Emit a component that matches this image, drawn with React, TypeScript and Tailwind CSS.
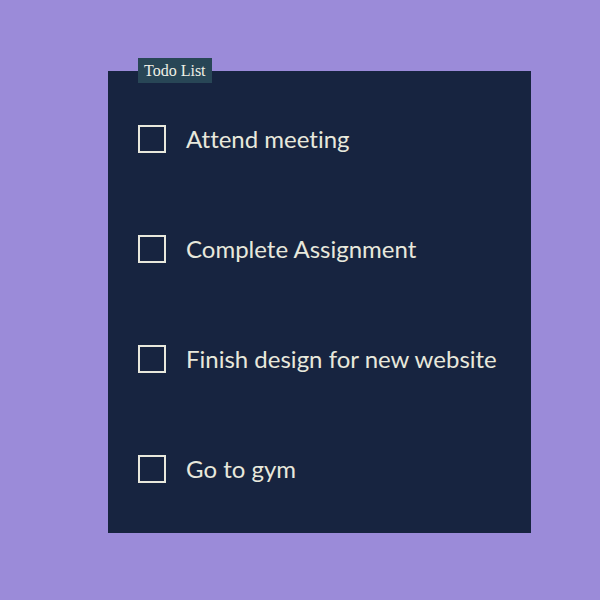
import React from "react";

const todos = ["Attend meeting", "Complete Assignment", "Finish design for new website", "Go to gym"];

const App: React.FC = () => {
  return (
    <div className="w-[600px] h-[600px] bg-[#9b8bd9] relative">
      <div className="absolute left-[108px] top-[71px] w-[423px] h-[462px] bg-[#172440] pl-[30px] pt-[13px]">
        <div className="absolute left-[30px] -top-[13px] h-[25px] px-[6px] bg-[#284656] text-[#f0f0e6] text-[16px] leading-[25px] font-['Liberation_Serif',serif]">
          Todo List
        </div>
        {todos.map((t) => (
          <div key={t} className="h-[110px] flex items-center gap-[20px]">
            <div className="w-[28px] h-[28px] border-2 border-[#e8e8dc]" />
            <span className="text-[24px] text-[#e8e8dc] font-['Lato',sans-serif] [font-variant-ligatures:none]">{t}</span>
          </div>
        ))}
      </div>
    </div>
  );
};

export default App;
